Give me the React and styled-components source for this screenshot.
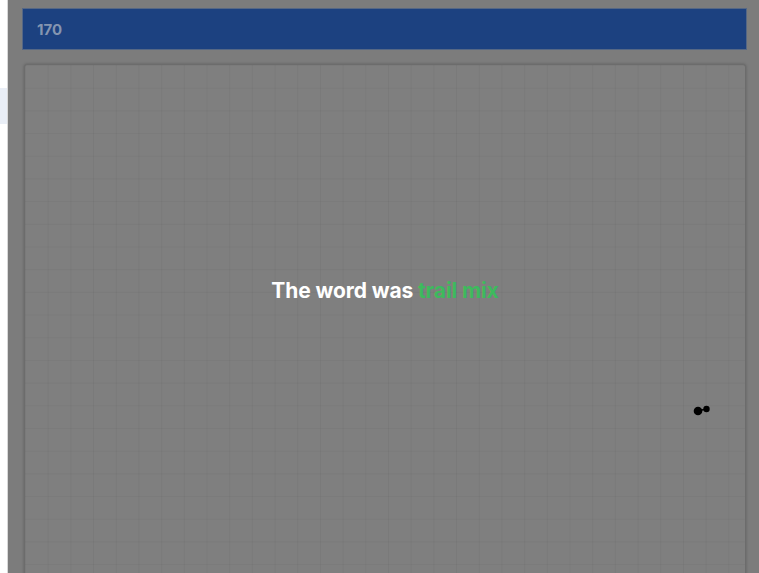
import React from "react";
import styled, { createGlobalStyle } from "styled-components";

const Global = createGlobalStyle`
  html, body { margin: 0; padding: 0; background: #ffffff; height: 100%; overflow: hidden; }
  #root { height: 100%; }
  * { box-sizing: border-box; }
`;

const Page = styled.div`
  display: flex;
  width: 759px;
  height: 573px;
  font-family: Inter, "Open Sans", "Liberation Sans", sans-serif;
`;

const SideStrip = styled.div`
  width: 8px;
  flex: none;
  background: #ffffff;
  padding-top: 88px;
  border-right: 1px solid #d8d8d8;
`;

const SideItem = styled.div`
  height: 36px;
  background: #e9eef6;
`;

const Overlay = styled.div`
  flex: 1;
  background: #7c7c7c;
  padding: 9px 13px 0 15px;
  display: flex;
  flex-direction: column;
  gap: 15px;
  overflow: hidden;
`;

const Header = styled.div`
  height: 40px;
  flex: none;
  background: #1c4180;
  display: flex;
  align-items: center;
  padding-left: 14px;
  font-size: 15px;
  font-weight: 700;
  color: #8595b0;
  box-shadow: 0 0 0 1px rgba(60, 90, 140, 0.6);
`;

const Board = styled.div`
  position: relative;
  flex: 1;
  margin: 0 0 -40px 1px;
  border: 1px solid #6c6c6c;
  border-radius: 3px;
  box-shadow: 0 0 3px rgba(0, 0, 0, 0.25);
  background-color: #7f7f7f;
  background-image:
    linear-gradient(to right, rgba(0, 0, 0, 0.04) 1px, transparent 1px),
    linear-gradient(to bottom, rgba(0, 0, 0, 0.035) 1px, transparent 1px);
  background-size: 22.7px 22.7px;
  background-position: 0 0;
  display: flex;
  justify-content: center;
  padding-top: 213px;
`;

const Message = styled.div`
  font-size: 21px;
  font-weight: 700;
  color: #ffffff;
  letter-spacing: -0.1px;
  height: 28px;
`;

const Word = styled.span`
  color: #3dba5d;
`;

const Cursor = styled.svg`
  position: absolute;
  left: 667px;
  top: 338px;
`;

export default function App() {
  return (
    <>
      <Global />
      <Page>
        <SideStrip>
          <SideItem />
        </SideStrip>
        <Overlay>
          <Header>170</Header>
          <Board>
            <Message>
              The word was <Word>trail mix</Word>
            </Message>
            <Cursor width="24" height="14" viewBox="0 0 24 14">
              <line x1="6" y1="8" x2="14" y2="6" stroke="#000" strokeWidth="1.6" />
              <circle cx="6" cy="8" r="4.3" fill="#000" />
              <circle cx="14.5" cy="6" r="3.2" fill="#000" />
            </Cursor>
          </Board>
        </Overlay>
      </Page>
    </>
  );
}
